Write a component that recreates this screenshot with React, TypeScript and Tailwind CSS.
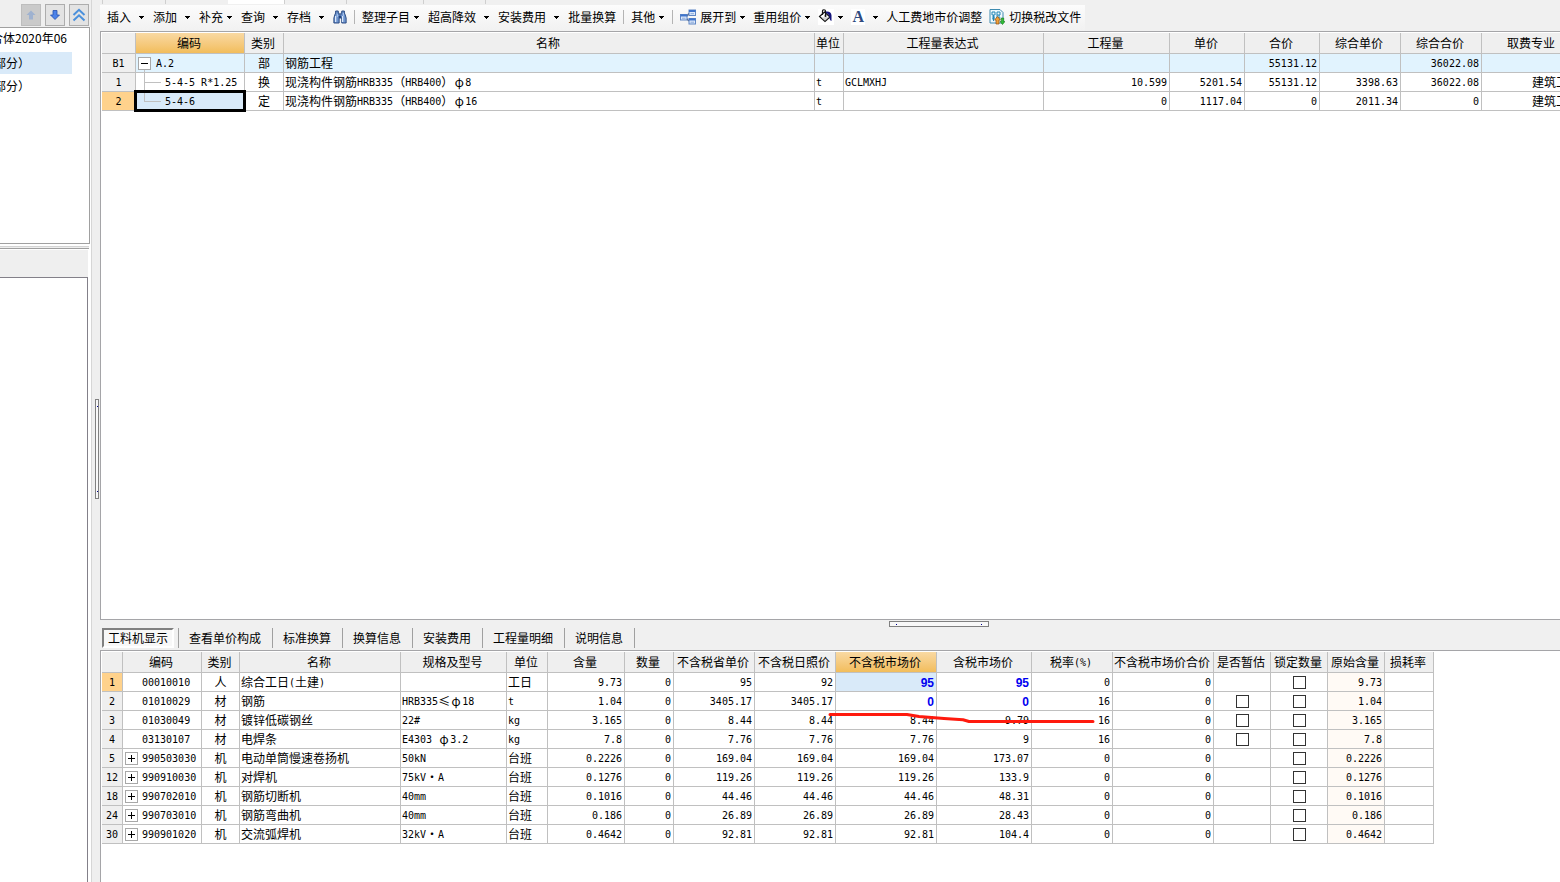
import { FC, ReactNode } from 'react';
import clsx from 'clsx';

type Align = 'left' | 'center' | 'right';

interface Column {
  key: string;
  title: string;
  width: number;
  align: Align;
}

const alignClass: Record<Align, string> = {
  left: 'text-left',
  center: 'text-center',
  right: 'text-right',
};

const itemColumns: Column[] = [
  { key: 'no', title: '', width: 34, align: 'center' },
  { key: 'code', title: '编码', width: 109, align: 'left' },
  { key: 'kind', title: '类别', width: 39, align: 'center' },
  { key: 'name', title: '名称', width: 531, align: 'left' },
  { key: 'unit', title: '单位', width: 29, align: 'left' },
  { key: 'expr', title: '工程量表达式', width: 200, align: 'left' },
  { key: 'qty', title: '工程量', width: 126, align: 'right' },
  { key: 'price', title: '单价', width: 75, align: 'right' },
  { key: 'total', title: '合价', width: 75, align: 'right' },
  { key: 'compPrice', title: '综合单价', width: 81, align: 'right' },
  { key: 'compTotal', title: '综合合价', width: 81, align: 'right' },
  { key: 'major', title: '取费专业', width: 101, align: 'right' },
];

const items: Record<string, string>[] = [
  { no: 'B1', code: 'A.2', kind: '部', name: '钢筋工程', total: '55131.12', compTotal: '36022.08' },
  {
    no: '1',
    code: '5-4-5 R*1.25',
    kind: '换',
    name: '现浇构件钢筋HRB335（HRB400）φ8',
    unit: 't',
    expr: 'GCLMXHJ',
    qty: '10.599',
    price: '5201.54',
    total: '55131.12',
    compPrice: '3398.63',
    compTotal: '36022.08',
    major: '建筑工程',
  },
  {
    no: '2',
    code: '5-4-6',
    kind: '定',
    name: '现浇构件钢筋HRB335（HRB400）φ16',
    unit: 't',
    qty: '0',
    price: '1117.04',
    total: '0',
    compPrice: '2011.34',
    compTotal: '0',
    major: '建筑工程',
  },
];

const resourceColumns: Column[] = [
  { key: 'no', title: '', width: 21, align: 'center' },
  { key: 'code', title: '编码', width: 79, align: 'left' },
  { key: 'kind', title: '类别', width: 38, align: 'center' },
  { key: 'name', title: '名称', width: 161, align: 'left' },
  { key: 'spec', title: '规格及型号', width: 106, align: 'left' },
  { key: 'unit', title: '单位', width: 41, align: 'left' },
  { key: 'content', title: '含量', width: 77, align: 'right' },
  { key: 'qty', title: '数量', width: 49, align: 'right' },
  { key: 'province', title: '不含税省单价', width: 81, align: 'right' },
  { key: 'city', title: '不含税日照价', width: 81, align: 'right' },
  { key: 'market', title: '不含税市场价', width: 101, align: 'right' },
  { key: 'taxed', title: '含税市场价', width: 95, align: 'right' },
  { key: 'rate', title: '税率(%)', width: 81, align: 'right' },
  { key: 'sum', title: '不含税市场价合价', width: 101, align: 'right' },
  { key: 'estimate', title: '是否暂估', width: 57, align: 'center' },
  { key: 'lock', title: '锁定数量', width: 57, align: 'center' },
  { key: 'origin', title: '原始含量', width: 57, align: 'right' },
  { key: 'loss', title: '损耗率', width: 49, align: 'right' },
];

// no, code, kind, name, spec, unit, content, province, city, market, taxed, rate
const resourceData = [
  ['1', '00010010', '人', '综合工日(土建)', '', '工日', '9.73', '95', '92', '95', '95', '0'],
  ['2', '01010029', '材', '钢筋', 'HRB335≤φ18', 't', '1.04', '3405.17', '3405.17', '0', '0', '16'],
  ['3', '01030049', '材', '镀锌低碳钢丝', '22#', 'kg', '3.165', '8.44', '8.44', '8.44', '9.79', '16'],
  ['4', '03130107', '材', '电焊条', 'E4303 φ3.2', 'kg', '7.8', '7.76', '7.76', '7.76', '9', '16'],
  ['5', '990503030', '机', '电动单筒慢速卷扬机', '50kN', '台班', '0.2226', '169.04', '169.04', '169.04', '173.07', '0'],
  ['12', '990910030', '机', '对焊机', '75kV·A', '台班', '0.1276', '119.26', '119.26', '119.26', '133.9', '0'],
  ['18', '990702010', '机', '钢筋切断机', '40mm', '台班', '0.1016', '44.46', '44.46', '44.46', '48.31', '0'],
  ['24', '990703010', '机', '钢筋弯曲机', '40mm', '台班', '0.186', '26.89', '26.89', '26.89', '28.43', '0'],
  ['30', '990901020', '机', '交流弧焊机', '32kV·A', '台班', '0.4642', '92.81', '92.81', '92.81', '104.4', '0'],
];

const resources: Record<string, string>[] = resourceData.map((r) => ({
  no: r[0],
  code: r[1],
  kind: r[2],
  name: r[3],
  spec: r[4],
  unit: r[5],
  content: r[6],
  qty: '0',
  province: r[7],
  city: r[8],
  market: r[9],
  taxed: r[10],
  rate: r[11],
  sum: '0',
  origin: r[6],
}));

const tabs = ['查看单价构成', '标准换算', '换算信息', '安装费用', '工程量明细', '说明信息'];

/* Half-width characters go in a mono face, symbols take one full-width slot */
const GridText: FC<{ text?: string }> = ({ text = '' }) => (
  <>
    {text.split(/([\x20-\x7e]+|[φ≤·])/).map((part, i) => {
      if (/^[\x20-\x7e]+$/.test(part)) {
        return (
          <span key={i} className="align-[1px] font-['DejaVu_Sans_Mono',monospace] text-[10px] whitespace-pre">
            {part}
          </span>
        );
      }
      if (/^[φ≤·]$/.test(part)) {
        return (
          <span key={i} className="inline-block w-3 text-center">
            {part}
          </span>
        );
      }
      return part;
    })}
  </>
);

const ExpandButton: FC<{ open?: boolean; label: string }> = ({ open, label }) => (
  <button
    aria-label={label}
    className="flex size-[13px] shrink-0 items-center justify-center border border-[#a8a8a8] bg-white"
  >
    <svg viewBox="0 0 7 7" className="size-[7px]" shapeRendering="crispEdges">
      <path d={open ? 'M0 3h7v1H0z' : 'M0 3h7v1H0zM3 0h1v7H3z'} fill="#000" />
    </svg>
  </button>
);

const GridCheckbox: FC<{ label: string }> = ({ label }) => (
  <input
    type="checkbox"
    aria-label={label}
    className="block mx-auto size-[13px] appearance-none border border-[#333] bg-white checked:bg-[#333]"
  />
);

interface GridProps {
  columns: Column[];
  rows: Record<string, string>[];
  activeColumn: string;
  activeRow: number;
  label: string;
  className: string;
  rowClass?: (index: number) => string;
  cellClass?: (key: string, index: number) => string;
  renderCell: (key: string, row: Record<string, string>, index: number) => ReactNode;
}

const Grid: FC<GridProps> = ({
  columns,
  rows,
  activeColumn,
  activeRow,
  label,
  className,
  rowClass,
  cellClass,
  renderCell,
}) => (
  <table aria-label={label} className={clsx('table-fixed border-separate border-spacing-0', className)}>
    <colgroup>
      {columns.map((c) => (
        <col key={c.key} style={{ width: c.width }} />
      ))}
    </colgroup>
    <thead>
      <tr>
        {columns.map((c) => (
          <th
            key={c.key}
            className={clsx(
              'h-[21px] border-r border-b border-[#c0c0c0] py-0 pr-0.5 pl-0 text-center font-normal whitespace-nowrap',
              c.key === activeColumn ? 'bg-linear-to-b from-[#f9d9a2] to-[#f2bd5b]' : 'bg-[#efefef]',
            )}
          >
            <GridText text={c.title} />
          </th>
        ))}
      </tr>
    </thead>
    <tbody>
      {rows.map((row, i) => (
        <tr key={row.no} className={rowClass?.(i)}>
          {columns.map((c) => (
            <td
              key={c.key}
              className={clsx(
                'h-[19px] border-r border-b border-[#c0c0c0] p-0',
                alignClass[c.align],
                c.key === 'no' && (i === activeRow ? 'bg-[#ffd28c]' : 'bg-[#efefef]'),
                c.key !== 'no' && c.key !== 'code' && (c.align === 'left' ? 'pl-px' : 'px-0.5'),
                cellClass?.(c.key, i),
              )}
            >
              <div className="h-[18px] leading-[18px] whitespace-nowrap">{renderCell(c.key, row, i)}</div>
            </td>
          ))}
        </tr>
      ))}
    </tbody>
  </table>
);

const renderItemCell = (key: string, row: Record<string, string>, index: number) => {
  if (key !== 'code') return <GridText text={row[key]} />;
  if (index === 0) {
    return (
      <div className="flex h-full pl-0.5">
        <div className="flex h-full flex-col items-center pt-[3px]">
          <ExpandButton open label="折叠 A.2" />
          <span className="w-px flex-1 bg-[#c0c0c0]" />
        </div>
        <span className="pl-[5px]">
          <GridText text={row.code} />
        </span>
      </div>
    );
  }
  const last = index === items.length - 1;
  return (
    <div
      className={clsx('flex h-full pl-2', last && 'relative bg-[#d9eaf9] outline-3 -outline-offset-1 outline-black')}
    >
      {last ? (
        <span className="h-[10px] w-[17px] border-b border-l border-[#c0c0c0]" />
      ) : (
        <span className="flex h-full w-[17px] items-center border-l border-[#c0c0c0]">
          <span className="h-px w-full bg-[#c0c0c0]" />
        </span>
      )}
      <span className="pl-1">
        <GridText text={row.code} />
      </span>
    </div>
  );
};

const renderResourceCell = (key: string, row: Record<string, string>, index: number) => {
  if (key === 'code') {
    return (
      <div className="flex h-full items-center gap-1 pl-0.5">
        {index > 3 ? <ExpandButton label={`展开 ${row.code}`} /> : <span className="w-[13px]" />}
        <span>
          <GridText text={row.code} />
        </span>
      </div>
    );
  }
  if (key === 'lock' || (key === 'estimate' && index > 0 && index < 4)) {
    return (
      <div className="flex h-full items-center">
        <GridCheckbox label={`${key === 'lock' ? '锁定数量' : '是否暂估'} ${row.code}`} />
      </div>
    );
  }
  if ((key === 'market' || key === 'taxed') && index < 2) {
    return <span className="font-['Liberation_Sans',sans-serif] text-xs font-bold text-[#0000f0]">{row[key]}</span>;
  }
  return <GridText text={row[key]} />;
};

const BinocularsIcon = () => (
  <svg viewBox="0 0 16 16" className="h-4 w-[14px]" preserveAspectRatio="none">
    <path
      d="M3 2h3v2h1v2h2V4h1V2h3v2l1 2 1 3v5h-5V9H7v5H1V9l1-3 1-2z"
      fill="#6f95cf"
      stroke="#24457e"
      strokeWidth="1"
    />
    <path d="M3 7v6M11 7v6" stroke="#dbe8fa" strokeWidth="1.4" />
    <path d="M5 5v3M12 4v3" stroke="#a9c4ec" />
    <path d="M6.5 8h3" stroke="#24457e" strokeWidth="2" />
  </svg>
);

const TreeIcon = () => (
  <svg viewBox="0 0 16 16" className="size-4">
    <path d="M6 8l3-3.500M6 9l3 3" stroke="#55637f" strokeWidth="1.400" fill="none" />
    {[
      [0.5, 5.5],
      [9, 1],
      [9, 9.5],
    ].map(([x, y]) => (
      <g key={`${x}-${y}`}>
        <rect x={x} y={y} width="6.500" height="5.500" fill="#dce8fa" stroke="#5f86c4" />
        <rect x={x} y={y} width="6.500" height="2" fill="#3f74cc" />
        <path d={`M${x + 1.5} ${y + 3.7}h3.500`} stroke="#8aa9d8" />
      </g>
    ))}
  </svg>
);

const BucketIcon = () => (
  <svg viewBox="0 0 16 16" className="size-4">
    <rect width="16" height="16" fill="#fff" />
    <path d="M1.500 7.500L6.500 3l5.500 5-5 4.500z" fill="#fff" stroke="#111" strokeWidth="1.200" />
    <path d="M4.500 6V2C4.500 .3 7.500 .3 7.500 2v5" fill="none" stroke="#111" strokeWidth="1.200" />
    <path d="M3.500 8.500l7-.5L7 11.500z" fill="#d0d0d0" />
    <path d="M8 2.500c3-.5 5.500 1 5.500 4V12c-1.500-.5-2-2-2-4C11 6 9.500 4.500 8 4z" fill="#15157c" />
    <circle cx="7.500" cy="7" r="1" fill="#111" />
  </svg>
);

const TaxIcon = () => (
  <svg viewBox="0 0 16 16" className="size-4">
    <path d="M1 .5h10l3 3V14H1z" fill="#eef8fd" stroke="#3e8bb0" />
    <path d="M3 3h3v3H3zM3 8h3M4.500 6v6M3 10l3-1M8 3h3v3H8zM8 6v3M10 6v3M7.500 9h4" fill="none" stroke="#2586b5" />
    <path d="M8.500 7.500l3 3.500H10v4H7v-4H5.500z" fill="#f0a239" stroke="#8c4c12" strokeWidth=".7" />
    <path d="M13.500 15.500l-2.500-3h1.300V9h2.400v3.500H16z" fill="#2fbf35" stroke="#14731a" strokeWidth=".6" />
  </svg>
);

interface ToolButtonProps {
  label?: string;
  name?: string;
  icon?: ReactNode;
  menu?: 'near' | 'far';
}

const ToolButton: FC<ToolButtonProps> = ({ label, name, icon, menu }) => (
  <button
    aria-label={name ?? label}
    className={clsx('flex h-6 shrink-0 items-center whitespace-nowrap', menu === 'far' ? 'gap-2' : 'gap-1')}
  >
    {icon}
    {label}
    {menu && (
      <svg viewBox="0 0 6 3" className="h-[3px] w-1.5" shapeRendering="crispEdges">
        <path d="M0 0h5v1H0zM1 1h3v1H1zM2 2h1v1H2z" fill="#000" />
      </svg>
    )}
  </button>
);

const ToolSeparator = () => <span className="mx-[7px] h-[14px] w-px shrink-0 bg-[#b4b4b4]" />;

const Toolbar = () => (
  <div className="flex h-[26px] w-max items-center bg-linear-to-b from-[#fcfcfc] to-[#f1f1f1] pr-1 pb-0.5 pl-[7px]">
    <div className="flex gap-2">
      <ToolButton label="插入" menu="far" />
      <ToolButton label="添加" menu="far" />
      <ToolButton label="补充" menu="near" />
      <ToolButton label="查询" menu="far" />
      <ToolButton label="存档" menu="far" />
      <ToolButton name="查找" icon={<BinocularsIcon />} />
    </div>
    <ToolSeparator />
    <div className="flex gap-2">
      <ToolButton label="整理子目" menu="near" />
      <ToolButton label="超高降效" menu="far" />
      <ToolButton label="安装费用" menu="far" />
      <ToolButton label="批量换算" />
    </div>
    <ToolSeparator />
    <ToolButton label="其他" menu="near" />
    <ToolSeparator />
    <div className="flex gap-[7px]">
      <ToolButton label="展开到" icon={<TreeIcon />} menu="near" />
      <ToolButton label="重用组价" menu="near" />
      <ToolButton name="填充颜色" icon={<BucketIcon />} menu="near" />
      <ToolButton
        name="字体颜色"
        icon={
          <span className="w-[14px] bg-white text-center font-['Liberation_Serif',serif] text-base leading-4 font-bold text-[#2f4a80]">
            A
          </span>
        }
        menu="far"
      />
      <ToolButton label="人工费地市价调整" />
      <ToolButton label="切换税改文件" icon={<TaxIcon />} />
    </div>
  </div>
);

const Sidebar = () => (
  <aside className="flex w-[91px] shrink-0 flex-col bg-white">
    <div className="flex h-[27px] items-center justify-end gap-1 bg-[#efefef] pt-0.5 pr-0.5">
      <button
        disabled
        aria-label="上移"
        className="flex h-[22px] w-5 items-center justify-center border border-[#bdbdbd] bg-[#cacaca]"
      >
        <svg viewBox="0 0 10 10" className="size-[10px]">
          <path d="M5 .5l4.500 4.500H7v4.500H3V5H.5z" fill="#9fb2d0" />
        </svg>
      </button>
      <button
        aria-label="下移"
        className="flex h-[22px] w-5 items-center justify-center border border-[#adadad] bg-[#e3e3e3]"
      >
        <svg viewBox="0 0 10 10" className="size-[10px]">
          <path d="M5 9.500l4.500-4.500H7V.5H3V5H.5z" fill="#4c82e8" stroke="#2450b0" strokeWidth=".8" />
        </svg>
      </button>
      <button
        aria-label="收起"
        className="flex h-[22px] w-5 items-center justify-center border border-[#adadad] bg-[#e3e3e3]"
      >
        <svg viewBox="0 0 14 14" className="size-[14px]">
          <path d="M1.500 7L7 1.800 12.500 7M1.500 12.500L7 7.300l5.500 5.200" fill="none" stroke="#4a90dc" strokeWidth="2" />
        </svg>
      </button>
    </div>
    <div className="mr-px h-[217px] overflow-hidden border-t border-r border-b border-[#a0a0a0] bg-white">
      <div className="flex h-[19px] w-[67px] items-center justify-end whitespace-nowrap">合体2020年06</div>
      <div className="mt-[5px] h-[22px] w-[72px] bg-[#d9eaf9]">
        <div className="flex h-full w-[30px] items-center justify-end whitespace-nowrap">部分）</div>
      </div>
      <div className="flex h-6 w-[30px] items-center justify-end whitespace-nowrap">部分）</div>
    </div>
    <div className="mt-0.5 mr-0.5 h-[3px] border-t border-b border-t-[#d4d4d4] border-b-[#a0a0a0] bg-[#efefef]" />
    <div className="mt-px mr-[3px] h-[27px] bg-[#efefef]" />
    <div className="mr-[3px] flex-1 border-t border-r border-[#838089]" />
  </aside>
);

const TabStrip = () => (
  <div className="flex h-[5px] bg-[#f0f0f0] pb-px pl-0.5">
    <span className="w-[63px] border-l border-[#cfcfcf]" />
    <span className="w-[63px] border-l border-[#cfcfcf]" />
    <span className="w-[57px] border-r border-[#cfcfcf] bg-white" />
    <span className="w-[62px] border-r border-[#cfcfcf]" />
    <span className="w-[77px] border-r border-[#cfcfcf]" />
    <span className="w-[62px] border-r border-[#cfcfcf]" />
  </div>
);

export default function App() {
  return (
    <div className="flex h-screen overflow-hidden bg-white font-['Noto_Sans_CJK_SC',sans-serif] text-xs text-black">
      <Sidebar />

      {/* vertical splitter */}
      <div className="w-[9px] shrink-0 border-l border-[#d6d6d6] bg-[#efefef] pt-[399px] pl-[3px]">
        <div className="flex h-[100px] w-1 flex-col items-end justify-between border border-[#808080] bg-[#f8f8f8] py-1.5">
          <span className="size-px bg-[#000090]" />
          <span className="size-px bg-[#000090]" />
        </div>
      </div>

      <main className="flex min-w-0 flex-1 flex-col bg-[#f0f0f0]">
        <TabStrip />
        <Toolbar />

        <section className="min-h-0 flex-1 overflow-hidden border border-r-0 border-[#a5a5a8] bg-white pt-px pl-px">
          <Grid
            label="分部分项"
            className="w-[1481px]"
            columns={itemColumns}
            rows={items}
            activeColumn="code"
            activeRow={2}
            rowClass={(i) => (i === 0 ? 'bg-[#e1f3fe]' : '')}
            renderCell={renderItemCell}
          />
        </section>

        {/* horizontal splitter */}
        <div className="h-2 pt-px pl-0.5">
          <div className="ml-[54%] flex h-1.5 w-[100px] items-center justify-between border border-[#808080] bg-[#f8f8f8] px-1.5">
            <span className="size-px bg-[#000090]" />
            <span className="size-px bg-[#000090]" />
          </div>
        </div>

        <nav className="flex h-[22px] items-start pl-0.5">
          <div className="h-5 border-r border-[#a0a0a0] pr-1">
            <button className="h-5 border-2 border-t-[#808080] border-r-white border-b-white border-l-[#808080] bg-[#f8f8f8] px-1 leading-4 whitespace-nowrap">
              工料机显示
            </button>
          </div>
          {tabs.map((tab) => (
            <button
              key={tab}
              className="h-5 border-r border-[#a0a0a0] pr-[11px] pl-[10px] leading-5 whitespace-nowrap"
            >
              {tab}
            </button>
          ))}
        </nav>

        <section className="h-[232px] shrink-0 overflow-hidden border-t border-l border-[#a5a5a8] bg-white pt-px pl-px">
          <div className="relative">
            <Grid
              label="工料机显示"
              className="w-[1332px]"
              columns={resourceColumns}
              rows={resources}
              activeColumn="market"
              activeRow={0}
              cellClass={(key, i) =>
                clsx(key === 'origin' && 'bg-[#fffaf5]', key === 'market' && i === 0 && 'bg-[#d9eaf9]')
              }
              renderCell={renderResourceCell}
            />
            {/* red pen mark */}
            <svg
              viewBox="0 0 270 14"
              className="pointer-events-none absolute top-[59px] left-[725px] h-[14px] w-[270px]"
            >
              <path
                d="M3 3.500H80L92 5.500 117 7.500 136 8.800 142 10.500H266"
                fill="none"
                stroke="#ff1a0e"
                strokeWidth="3"
                strokeLinecap="round"
                strokeLinejoin="round"
              />
            </svg>
          </div>
        </section>
      </main>
    </div>
  );
}
